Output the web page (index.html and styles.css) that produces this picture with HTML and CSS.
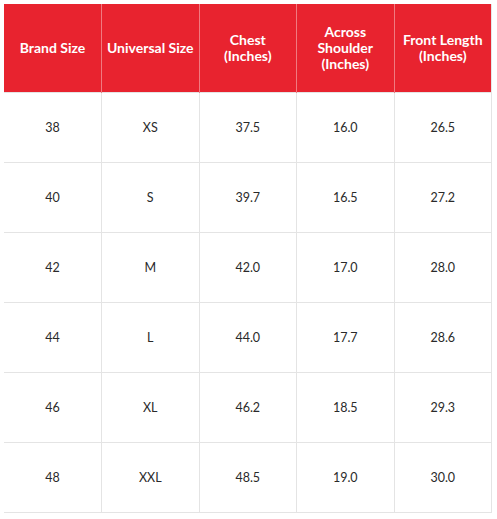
FILE: index.html
```html
<!DOCTYPE html>
<html>
<head>
<meta charset="utf-8">
<link rel="stylesheet" href="styles.css">
</head>
<body>
<table class="size-table">
  <thead>
    <tr>
      <th>Brand Size</th>
      <th>Universal Size</th>
      <th>Chest<br>(Inches)</th>
      <th>Across<br>Shoulder<br>(Inches)</th>
      <th>Front Length<br>(Inches)</th>
    </tr>
  </thead>
  <tbody>
    <tr><td>38</td><td>XS</td><td>37.5</td><td>16.0</td><td>26.5</td></tr>
    <tr><td>40</td><td>S</td><td>39.7</td><td>16.5</td><td>27.2</td></tr>
    <tr><td>42</td><td>M</td><td>42.0</td><td>17.0</td><td>28.0</td></tr>
    <tr><td>44</td><td>L</td><td>44.0</td><td>17.7</td><td>28.6</td></tr>
    <tr><td>46</td><td>XL</td><td>46.2</td><td>18.5</td><td>29.3</td></tr>
    <tr><td>48</td><td>XXL</td><td>48.5</td><td>19.0</td><td>30.0</td></tr>
  </tbody>
</table>
</body>
</html>
```
FILE: styles.css
```css
html, body {
  margin: 0;
  background: #ffffff;
}
body {
  padding: 4px;
  font-family: Lato, "Open Sans", sans-serif;
}
.size-table {
  width: 488px;
  border-collapse: collapse;
  table-layout: fixed;
}
.size-table th {
  background: #e8232f;
  color: #ffffff;
  font-weight: 700;
  font-size: 14px;
  line-height: 16px;
  height: 88px;
  padding: 0 2px;
  text-align: center;
  vertical-align: middle;
  border-right: 1px solid #f07a80;
  border-left: 1px solid #f07a80;
}
.size-table th:first-child { border-left: none; }
.size-table th:last-child { border-right: 1px solid #e6e6e6; }
.size-table td {
  height: 69px;
  padding: 0;
  text-align: center;
  vertical-align: middle;
  font-size: 12.5px;
  color: #2a2a2a;
  border: 1px solid #e4e4e4;
}
.size-table td:first-child { border-left: none; }
```
